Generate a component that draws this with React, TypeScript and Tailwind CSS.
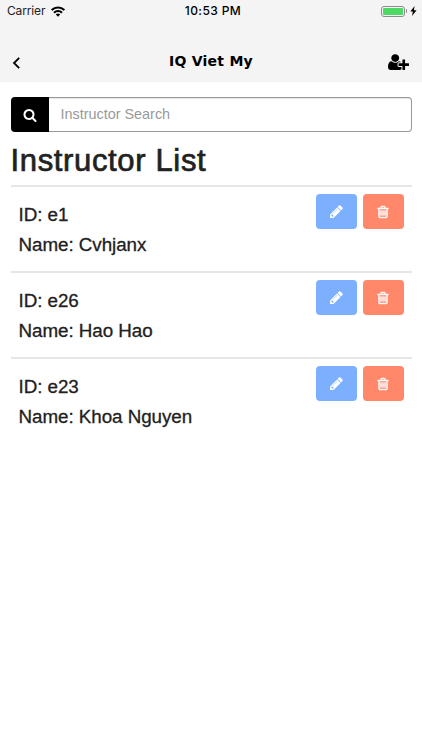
type IconProps = {
	className?: string
}

type Instructor = {
	id: string
	name: string
}

const instructors: Instructor[] = [
	{ id: 'e1', name: 'Cvhjanx' },
	{ id: 'e26', name: 'Hao Hao' },
	{ id: 'e23', name: 'Khoa Nguyen' }
]

function SearchIcon({ className }: IconProps) {
	return (
		<svg className={className} viewBox="0 0 1792 1792" fill="currentColor">
			<path d="M1216 832q0-185-131.5-316.5t-316.5-131.5-316.5 131.5-131.5 316.5 131.5 316.5 316.5 131.5 316.5-131.5 131.5-316.5zm512 832q0 52-38 90t-90 38q-54 0-90-38l-343-342q-179 124-399 124-143 0-273.5-55.5t-225-150-150-225-55.5-273.5 55.5-273.5 150-225 225-150 273.5-55.5 273.5 55.5 225 150 150 225 55.5 273.5q0 220-124 399l343 343q37 37 37 90z" />
		</svg>
	)
}

function PencilIcon({ className }: IconProps) {
	return (
		<svg className={className} viewBox="0 0 1792 1792" fill="currentColor">
			<path d="M491 1536l91-91-235-235-91 91v107h128v128h107zm523-928q0-22-22-22-10 0-17 7l-542 542q-7 7-7 17 0 22 22 22 10 0 17-7l542-542q7-7 7-17zm-54-192l416 416-832 832h-416v-416zm683 96q0 53-37 90l-166 166-416-416 166-165q36-38 90-38 53 0 91 38l235 234q37 39 37 91z" />
		</svg>
	)
}

function TrashIcon({ className }: IconProps) {
	return (
		<svg className={className} viewBox="0 0 1792 1792" fill="currentColor" stroke="currentColor" strokeWidth="60">
			<path d="M704 736v576q0 14-9 23t-23 9h-64q-14 0-23-9t-9-23v-576q0-14 9-23t23-9h64q14 0 23 9t9 23zm256 0v576q0 14-9 23t-23 9h-64q-14 0-23-9t-9-23v-576q0-14 9-23t23-9h64q14 0 23 9t9 23zm256 0v576q0 14-9 23t-23 9h-64q-14 0-23-9t-9-23v-576q0-14 9-23t23-9h64q14 0 23 9t9 23zm128 724v-948h-896v948q0 22 7 40.5t14.5 27 10.5 8.5h832q3 0 10.5-8.5t14.5-27 7-40.5zm-672-1076h448l-48-117q-7-9-17-11h-317q-10 2-17 11zm928 32v64q0 14-9 23t-23 9h-96v948q0 83-47 143.5t-113 60.5h-832q-66 0-113-58.5t-47-141.5v-952h-96q-14 0-23-9t-9-23v-64q0-14 9-23t23-9h309l70-167q15-37 54-63t79-26h320q40 0 79 26t54 63l70 167h309q14 0 23 9t9 23z" />
		</svg>
	)
}

function UserPlusIcon({ className }: IconProps) {
	return (
		<svg className={className} viewBox="0 128 2048 1536" fill="currentColor">
			<path d="M704 896q-159 0-271.5-112.5t-112.5-271.5 112.5-271.5 271.5-112.5 271.5 112.5 112.5 271.5-112.5 271.5-271.5 112.5zm960 128h352q13 0 22.5 9.5t9.5 22.5v192q0 13-9.5 22.5t-22.5 9.5h-352v352q0 13-9.5 22.5t-22.5 9.5h-192q-13 0-22.5-9.5t-9.5-22.5v-352h-352q-13 0-22.5-9.5t-9.5-22.5v-192q0-13 9.5-22.5t22.5-9.5h352v-352q0-13 9.5-22.5t22.5-9.5h192q13 0 22.5 9.5t9.5 22.5v352zm-736 224q0 52 38 90t90 38h256v238q-68 50-171 50h-874q-121 0-194-69t-73-190q0-53 3.5-103.5t14-109 26.5-108.5 43-97.5 62-81 85.5-53.5 111.5-20q19 0 39 17 79 61 154.5 91.5t164.5 30.5 164.5-30.5 154.5-91.5q20-17 39-17 132 0 217 96h-223q-52 0-90 38t-38 90v192z" />
		</svg>
	)
}

function WifiIcon({ className }: IconProps) {
	return (
		<svg className={className} viewBox="0 0 14 11" fill="none" stroke="currentColor" strokeWidth="2.1">
			<path d="M0.7 4.1a8.9 8.9 0 0 1 12.6 0" />
			<path d="M3 6.7a5.6 5.6 0 0 1 8 0" />
			<path d="M4.8 8.6a3.1 3.1 0 0 1 4.4 0L7 10.8z" fill="currentColor" stroke="none" />
		</svg>
	)
}

function StatusBar() {
	return (
		<div className="grid h-[22px] grid-cols-3 items-center pl-[7px] pr-[5px] font-[Inter,sans-serif] text-black">
			<div className="flex items-center gap-[6px]">
				<span className="text-[12px] leading-[22px] tracking-[-0.15px] text-[#222]">Carrier</span>
				<WifiIcon className="h-[11px] w-[14px]" />
			</div>
			<span className="pl-[2px] text-center text-[12px] font-medium leading-[22px] tracking-[0.4px]">10:53 PM</span>
			<div className="flex items-center justify-end">
				<div className="h-[11px] w-6 rounded-[3px] border border-[#8c8c8c] p-px">
					<div className="h-full rounded-[1px] bg-[#4cd964]" />
				</div>
				<div className="ml-px h-1 w-px rounded-r bg-[#8c8c8c]" />
				<svg className="ml-[3px] h-[10px] w-[7px]" viewBox="0 0 7 10" fill="currentColor">
					<path d="M4.6 0L0.3 5.6h2.6L2 10l4.6-5.8H3.9z" />
				</svg>
			</div>
		</div>
	)
}

function Header() {
	return (
		<header className="h-[82px] bg-[#f4f4f4]">
			<StatusBar />
			<div className="grid h-[60px] grid-cols-[1fr_auto_1fr] items-center px-3 pt-[19px] pb-px">
				<button type="button" aria-label="Back">
					<svg className="mt-[3px] h-3 w-[9px]" viewBox="0 0 9 12" fill="none" stroke="black" strokeWidth="1.8">
						<path d="M7.2 0.8L2 6l5.2 5.2" />
					</svg>
				</button>
				<h1 className="font-['DejaVu_Sans',sans-serif] text-[14px] font-bold leading-5 tracking-[0.25px] text-black">IQ Viet My</h1>
				<button type="button" aria-label="Add instructor" className="justify-self-end">
					<UserPlusIcon className="mr-px mt-px h-4 w-[21px] text-black" />
				</button>
			</div>
		</header>
	)
}

function InstructorRow({ id, name }: Instructor) {
	return (
		<li className="flex h-[86.2px] justify-between border-t-2 border-[#e6e6e6] pl-2 pr-[8px] pt-[7px]">
			<div className="pt-[6px] text-[18.8px] leading-[29.5px] tracking-[-0.04px] [-webkit-text-stroke:0.3px_#212121]">
				<p>ID: {id}</p>
				<p>Name: {name}</p>
			</div>
			<div className="flex gap-[6px] text-white">
				<button type="button" aria-label="Edit" className="flex h-[35px] w-[41px] items-center justify-center rounded-[4px] bg-[#7cb0ff]">
					<PencilIcon className="h-[15px] w-[15px]" />
				</button>
				<button type="button" aria-label="Delete" className="flex h-[35px] w-[41px] items-center justify-center rounded-[4px] bg-[#ff876a]">
					<TrashIcon className="h-[14px] w-[14px]" />
				</button>
			</div>
		</li>
	)
}

export default function App() {
	return (
		<div className="min-h-screen bg-white font-['Liberation_Sans',Arial,sans-serif] text-[#212121]">
			<Header />
			<main className="px-[10.5px] pt-[15px]">
				<div className="flex h-[35px]">
					<div className="flex w-[38px] items-center justify-center rounded-l-[4px] bg-black text-white">
						<SearchIcon className="h-[14px] w-[14px]" />
					</div>
					<input
						type="text"
						placeholder="Instructor Search"
						className="min-w-0 flex-1 rounded-r-[4px] border border-l-0 border-[#999] px-3 pt-px text-[14.4px] shadow-[inset_0_1px_1px_rgba(0,0,0,0.1)] outline-none placeholder:text-[#999]"
					/>
				</div>
				<h2 className="mt-[9px] h-[44px] text-[31px] leading-[39px] tracking-[0.65px] [-webkit-text-stroke:0.7px_#212121]">Instructor List</h2>
				<ul>
					{instructors.map(({ id, name }) => (
						<InstructorRow key={id} id={id} name={name} />
					))}
				</ul>
			</main>
		</div>
	)
}
